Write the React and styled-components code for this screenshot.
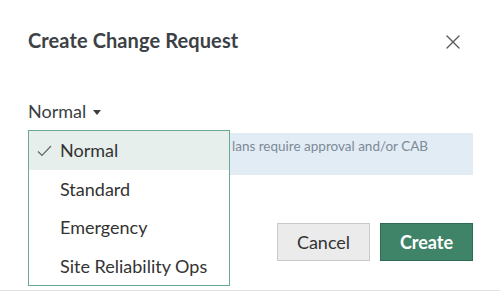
import React from 'react';
import styled, { createGlobalStyle } from 'styled-components';

const GlobalStyle = createGlobalStyle`
  html, body {
    margin: 0;
    padding: 0;
    background: #ffffff;
  }
  body {
    font-family: Lato, "Liberation Sans", sans-serif;
    color: #333;
  }
`;

const options = ['Normal', 'Standard', 'Emergency', 'Site Reliability Ops'];

const App = () => {
  const selected = 'Normal';

  return (
    <>
      <GlobalStyle />
      <Modal>
        <Header>
          <Title>Create Change Request</Title>
          <CloseButton aria-label="Close">
            <svg width="14" height="14" viewBox="0 0 14 14">
              <path d="M1 1L13 13M13 1L1 13" stroke="#555" strokeWidth="1.3" strokeLinecap="round" />
            </svg>
          </CloseButton>
        </Header>

        <TypeSelect>
          <TypeToggle>
            {selected}
            <Caret />
          </TypeToggle>
          <Menu>
            {options.map((opt) => (
              <MenuItem key={opt} active={opt === selected}>
                <Check>
                  {opt === selected && (
                    <svg width="15" height="12" viewBox="0 0 15 12">
                      <path d="M1 6.5L5 10.5L14 1" fill="none" stroke="#666" strokeWidth="1.2" />
                    </svg>
                  )}
                </Check>
                {opt}
              </MenuItem>
            ))}
          </Menu>
        </TypeSelect>

        {/* left part of the notice sits under the open menu */}
        <InfoBox>lans require approval and/or CAB</InfoBox>

        <Footer>
          <Button>Cancel</Button>
          <Button primary>Create</Button>
        </Footer>
      </Modal>
    </>
  );
};

const Modal = styled.div`
  width: 500px;
  height: 291px;
  box-sizing: border-box;
  padding: 25px 27px 0 28px;
  border-bottom: 1px solid #e2e2e2;
  display: flex;
  flex-direction: column;
`;

const Header = styled.div`
  display: flex;
  align-items: center;
  justify-content: space-between;
  height: 30px;
`;

const Title = styled.h1`
  margin: 0;
  font-size: 20px;
  font-weight: 700;
  color: #3c4146;
  letter-spacing: 0.1px;
`;

const CloseButton = styled.button`
  width: 32px;
  height: 32px;
  margin-right: 4px;
  margin-top: 4px;
  border: none;
  background: none;
  padding: 0;
  display: flex;
  align-items: center;
  justify-content: center;
  cursor: pointer;
`;

const TypeSelect = styled.div`
  position: relative;
  margin-top: 43px;
  height: 30px;
`;

const TypeToggle = styled.div`
  display: inline-flex;
  align-items: center;
  gap: 7px;
  font-size: 18px;
  line-height: 26px;
  color: #3a3f44;
`;

const Caret = styled.span`
  width: 0;
  height: 0;
  border-left: 4.5px solid transparent;
  border-right: 4.5px solid transparent;
  border-top: 5px solid #3a3f44;
  margin-top: 2px;
`;

const Menu = styled.ul`
  position: absolute;
  top: 32px;
  left: 0;
  z-index: 2;
  width: 202px;
  box-sizing: border-box;
  margin: 0;
  padding: 0;
  list-style: none;
  background: #ffffff;
  border: 1px solid #6aa890;
`;

const MenuItem = styled.li`
  display: flex;
  align-items: center;
  height: 38.5px;
  padding-left: 8px;
  font-size: 18px;
  color: #333;
  background: ${(p) => (p.active ? '#e6efec' : '#ffffff')};
`;

const Check = styled.span`
  width: 23px;
  display: flex;
  align-items: center;
  justify-content: flex-start;
  padding-top: 1px;
`;

const InfoBox = styled.div`
  margin-top: 5px;
  height: 42px;
  box-sizing: border-box;
  padding: 4px 12px 0 204px;
  background: #e2ecf5;
  font-size: 13.5px;
  line-height: 18px;
  color: #7d8a96;
`;

const Footer = styled.div`
  display: flex;
  justify-content: flex-end;
  gap: 10px;
  margin-top: 48px;
`;

const Button = styled.button`
  height: 38px;
  padding: 0 18px;
  min-width: 93px;
  font-family: Lato, "Liberation Sans", sans-serif;
  font-size: 18px;
  font-weight: ${(p) => (p.primary ? 700 : 400)};
  color: ${(p) => (p.primary ? '#ffffff' : '#333')};
  background: ${(p) => (p.primary ? '#3f8468' : '#ebebeb')};
  border: 1px solid ${(p) => (p.primary ? '#2f6b53' : '#c9c9c9')};
  border-radius: 0;
  cursor: pointer;
`;

export default App;
